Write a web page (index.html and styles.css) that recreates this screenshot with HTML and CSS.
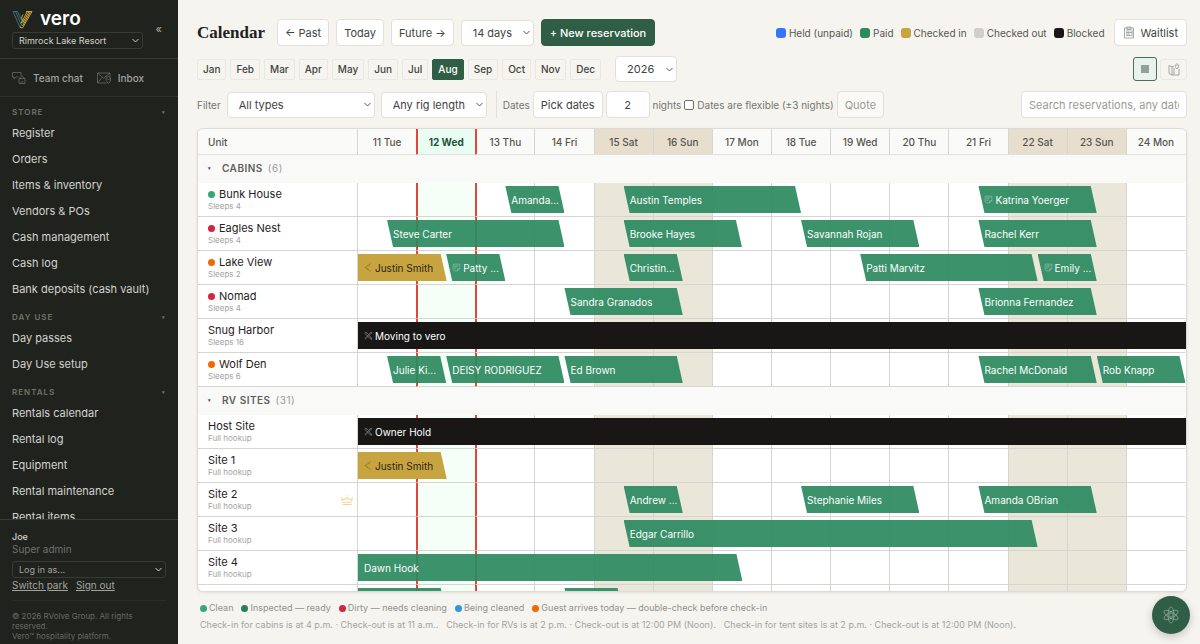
FILE: index.html
```html
<!DOCTYPE html>
<html lang="en">
<head>
  <meta charset="UTF-8" />
  <meta name="viewport" content="width=device-width, initial-scale=1" />
  <title>Calendar - vero</title>
  <link rel="stylesheet" href="styles.css">
</head>
<body>
  <!-- shared icons -->
  <svg class="sprite" aria-hidden="true">
    <symbol id="icon-note" viewBox="0 0 16 16">
      <path d="M2 2h12v8l-4 4H4l-2-2zM10 14v-4h4M4 5h8M4 7h5M4 10c1-2 2 1 3-1" />
    </symbol>
    <symbol id="icon-share" viewBox="0 0 16 16">
      <path d="M12 1L8 4 4 7l-2 1 3 3 3 1 4 3M8 4l2 1M5 11l2-1M4 7l1 1" />
    </symbol>
    <symbol id="icon-tools" viewBox="0 0 16 16">
      <path d="M2 2l3 1 8 9 1 3-3-1-9-9zM14 2l-3 1-8 9-1 2 2-1 8-8zM3 4l2-1M10 10l2 4M11 3l2 2" />
    </symbol>
    <symbol id="icon-crown" viewBox="0 0 16 16">
      <path d="M2 10L1 6l3 2 1-2M6 8l2-4 2 4M11 6l1 2 3-2-1 4M2 11h12M2 14h12M8 1v1M1 4v1M15 4v1" />
    </symbol>
  </svg>

  <div class="app">
    <aside class="sidebar">
      <div class="brand">
        <div class="brand-main">
          <div class="logo">
            <svg width="21" height="19" viewBox="0 0 42 38" aria-hidden="true">
              <path class="logo-teal" d="M2 3l14 32 5-10L11 3M7 3l12 27M2 3h9" />
              <path class="logo-gold" d="M16 35l5 1L40 3h-6L22 25M37 3L21 32M28 3h6M30 4L18 27M22 9l-3 7 5 9" />
            </svg>
            <span>vero</span>
          </div>
          <select class="park-select" aria-label="Park">
            <option>Rimrock Lake Resort</option>
          </select>
        </div>
        <button class="collapse" aria-label="Collapse sidebar">«</button>
      </div>

      <div class="messages">
        <a href="#">
          <svg width="14" height="14" viewBox="0 0 28 28" aria-hidden="true">
            <path d="M1 3h17v6M1 3v9h3v4l4-4h5M14 15v10h12V15zM16 15c0-5 8-5 8 0M17 22h6M20 8v2" />
          </svg>
          Team chat
        </a>
        <a href="#">
          <svg width="14" height="14" viewBox="0 0 28 28" aria-hidden="true">
            <path d="M1 4h25v9M1 4v20h18M1 4l12 10L26 4M1 24l9-11M23 25l-5-6v-6l5-2 4 3v6zM20 15l3 3 3-3" />
          </svg>
          Inbox
        </a>
      </div>

      <nav class="menu">
        <h2>Store <span>▾</span></h2>
        <a href="#">Register</a>
        <a href="#">Orders</a>
        <a href="#">Items &amp; inventory</a>
        <a href="#">Vendors &amp; POs</a>
        <a href="#">Cash management</a>
        <a href="#">Cash log</a>
        <a href="#">Bank deposits (cash vault)</a>
        <h2>Day use <span>▾</span></h2>
        <a href="#">Day passes</a>
        <a href="#">Day Use setup</a>
        <h2>Rentals <span>▾</span></h2>
        <a href="#">Rentals calendar</a>
        <a href="#">Rental log</a>
        <a href="#">Equipment</a>
        <a href="#">Rental maintenance</a>
        <a href="#">Rental items</a>
      </nav>

      <div class="account">
        <div class="account-name">Joe</div>
        <div class="account-role">Super admin</div>
        <select class="login-select" aria-label="Log in as">
          <option>Log in as...</option>
        </select>
        <div class="account-links">
          <a href="#">Switch park</a>
          <a href="#">Sign out</a>
        </div>
        <p class="copyright">© 2026 RVolve Group. All rights reserved.<br>Vero™ hospitality platform.</p>
      </div>
    </aside>

    <main class="main">
      <div class="toolbar">
        <h1>Calendar</h1>
        <button class="btn">← Past</button>
        <button class="btn">Today</button>
        <button class="btn">Future →</button>
        <select class="field days-select" aria-label="Days shown">
          <option>14 days</option>
        </select>
        <button class="btn primary">+ New reservation</button>
        <ul class="legend">
          <li><i class="held"></i>Held (unpaid)</li>
          <li><i class="paid"></i>Paid</li>
          <li><i class="checked-in"></i>Checked in</li>
          <li><i class="checked-out"></i>Checked out</li>
          <li><i class="blocked"></i>Blocked</li>
        </ul>
        <button class="btn waitlist">
          <svg width="12" height="13" viewBox="0 0 24 26" aria-hidden="true">
            <path d="M3 4h18v20H3zM8 2h8v5H8zM6 10h9M6 13h12M6 16h8M6 19h11M18 7v14" />
          </svg>
          Waitlist
        </button>
      </div>

      <div class="months-row">
        <div class="months" id="months"></div>
        <select class="field year-select" aria-label="Year">
          <option>2026</option>
        </select>
        <div class="views">
          <button class="view active" aria-label="Grid view"><i></i></button>
          <button class="view" aria-label="Map view">
            <svg width="12" height="13" viewBox="0 0 24 26" aria-hidden="true">
              <path d="M2 5l6 3v16l-6-3zM8 8l4-2M8 24h14V12M12 10v13M18 12c-6-6-3-10 0-10s6 4 0 10zM17 5h2" />
            </svg>
          </button>
        </div>
      </div>

      <div class="filters">
        <label for="type">Filter</label>
        <select class="field type-select" id="type">
          <option>All types</option>
        </select>
        <select class="field rig-select" aria-label="Rig length">
          <option>Any rig length</option>
        </select>
        <div class="dates">
          <span>Dates</span>
          <button class="btn">Pick dates</button>
          <input class="field nights" id="nights" type="text" value="2">
          <label for="nights">nights</label>
          <label class="flexible"><input type="checkbox">Dates are flexible (±3 nights)</label>
          <button class="btn" disabled>Quote</button>
        </div>
        <input class="field search" type="text" placeholder="Search reservations, any date" aria-label="Search reservations">
      </div>

      <div class="calendar">
        <table>
          <thead>
            <tr id="days"><th class="unit-head">Unit</th></tr>
          </thead>
          <tbody id="units"></tbody>
        </table>
      </div>

      <ul class="statuses">
        <li><i class="dot clean"></i>Clean</li>
        <li><i class="dot inspected"></i>Inspected — ready</li>
        <li><i class="dot dirty"></i>Dirty — needs cleaning</li>
        <li><i class="dot cleaning"></i>Being cleaned</li>
        <li><i class="dot arriving"></i>Guest arrives today — double-check before check-in</li>
      </ul>
      <div class="times">
        <span>Check-in for cabins is at 4 p.m. · Check-out is at 11 a.m..</span>
        <span>Check-in for RVs is at 2 p.m. · Check-out is at 12:00 PM (Noon).</span>
        <span>Check-in for tent sites is at 2 p.m. · Check-out is at 12:00 PM (Noon).</span>
      </div>
    </main>
  </div>

  <button class="assistant" aria-label="Assistant">
    <svg width="18" height="18" viewBox="0 0 36 36" aria-hidden="true">
      <ellipse cx="18" cy="18" rx="6" ry="16" />
      <ellipse cx="18" cy="18" rx="6" ry="16" transform="rotate(60 18 18)" />
      <ellipse cx="18" cy="18" rx="6" ry="16" transform="rotate(120 18 18)" />
      <circle cx="18" cy="18" r="4" />
    </svg>
  </button>

  <script src="script.js"></script>
</body>
</html>
```
FILE: styles.css
```css
* {
  box-sizing: border-box;
}

body {
  margin: 0;
  background: #f5f4ef;
  color: #1f211d;
  font-family: Inter, "Liberation Sans", sans-serif;
  font-size: 11px;
}

button,
input,
select {
  font: inherit;
  color: inherit;
  margin: 0;
}

ul {
  list-style: none;
  margin: 0;
  padding: 0;
}

.sprite {
  display: none;
}

svg {
  flex: none;
  fill: none;
  stroke: currentColor;
}

.app {
  display: flex;
  height: 100vh;
}

/* SIDEBAR */
.sidebar {
  flex: none;
  width: 178px;
  display: flex;
  flex-direction: column;
  background: #20221d;
  color: #d3d3ce;
}

.brand {
  display: flex;
  align-items: center;
  justify-content: space-between;
  padding: 8px 14px 9px 12px;
  border-bottom: 1px solid #383a35;
}

.logo {
  display: flex;
  align-items: center;
  gap: 7px;
  height: 22px;
  margin-bottom: 2px;
  color: #fff;
  font-size: 19px;
  font-weight: 600;
  line-height: 20px;
}

.logo svg {
  stroke-width: 2;
}

.logo-teal {
  stroke: #3f7277;
}

.logo-gold {
  stroke: #c9a43c;
}

.park-select,
.login-select {
  appearance: none;
  display: block;
  height: 17px;
  padding: 0 18px 0 6px;
  border: 1px solid #383a35;
  border-radius: 3px;
  background: url("data:image/svg+xml,%3Csvg xmlns='http://www.w3.org/2000/svg' width='7' height='5'%3E%3Cpath d='M.5 1l3 3 3-3' fill='none' stroke='%23ccc'/%3E%3C/svg%3E") no-repeat right 3px center;
  font-size: 9px;
}

.park-select {
  width: 131px;
}

.collapse {
  padding: 0 2px;
  border: 0;
  background: none;
  color: #a9aaa5;
}

.messages {
  display: flex;
  gap: 14px;
  padding: 0 12px;
  border-bottom: 1px solid #30322d;
}

.messages a {
  display: flex;
  align-items: center;
  gap: 7px;
  height: 37px;
  color: #a3a49f;
  font-size: 10px;
  font-weight: 500;
  text-decoration: none;
}

.messages svg {
  color: #6d6f69;
  stroke-width: 1.5;
}

.menu {
  flex: 1;
  min-height: 0;
  overflow: hidden;
  padding: 7px 12px 0;
}

.menu h2 {
  display: flex;
  justify-content: space-between;
  margin: 7px 0 0;
  color: #70726b;
  font-size: 8px;
  font-weight: 600;
  line-height: 16px;
  letter-spacing: 1px;
  text-transform: uppercase;
}

.menu h2:first-child {
  margin-top: 0;
}

.menu h2 span {
  font-size: 5px;
}

.menu a {
  display: block;
  color: #d3d3ce;
  line-height: 26px;
  text-decoration: none;
}

.account {
  padding: 10px 12px 3px;
  border-top: 1px solid #383a35;
  font-size: 10px;
  line-height: 13px;
}

.account-name {
  font-size: 9px;
  font-weight: 500;
}

.account-role {
  color: #6f716b;
}

.login-select {
  width: 100%;
  margin-top: 5px;
  color: #a3a49f;
}

.account-links {
  display: flex;
  gap: 8px;
  line-height: 14px;
}

.account-links a {
  color: #a3a49f;
}

.copyright {
  margin: 8px 0 0;
  padding-top: 10px;
  border-top: 1px solid #2a2c27;
  color: #686a64;
  font-size: 8px;
  line-height: 10px;
}

/* MAIN */
.main {
  flex: 1;
  min-width: 0;
  display: flex;
  flex-direction: column;
  padding: 19px 13px 12px 19px;
}

.toolbar,
.months-row,
.filters,
.dates {
  display: flex;
  align-items: center;
}

.toolbar {
  gap: 7px;
  margin-bottom: 10px;
}

h1 {
  margin: 0 5px 0 0;
  font-family: "Liberation Serif", serif;
  font-size: 17px;
  font-weight: 700;
  line-height: 26px;
}

.btn,
.field {
  height: 27px;
  padding: 0 7px;
  border: 1px solid #e2e0da;
  border-radius: 4px;
  background-color: #fff;
  color: #42443f;
  white-space: nowrap;
}

.btn.primary {
  padding: 0 8px;
  border-color: #2f5d45;
  background: #2f5d45;
  color: #fff;
  font-weight: 500;
}

.btn:disabled {
  background: #faf9f6;
  color: #9b9c97;
}

select.field {
  appearance: none;
  height: 26px;
  padding: 0 18px 0 11px;
  background-image: url("data:image/svg+xml,%3Csvg xmlns='http://www.w3.org/2000/svg' width='7' height='5'%3E%3Cpath d='M.5 1l3 3 3-3' fill='none' stroke='%23555'/%3E%3C/svg%3E");
  background-repeat: no-repeat;
  background-position: right 3px center;
}

.days-select {
  width: 73px;
}

.legend {
  display: flex;
  gap: 7px;
  margin-left: auto;
  color: #55574f;
  font-size: 10px;
}

.legend li {
  display: flex;
  align-items: center;
  gap: 3px;
}

.legend i {
  width: 10px;
  height: 10px;
  border-radius: 3px;
}

.held { background: #3576f6; }
.paid { background: #2d8a60; }
.checked-in { background: #c7a440; }
.checked-out { background: #d0cfca; }
.blocked { background: #181715; }

.waitlist {
  display: flex;
  align-items: center;
  gap: 6px;
  margin-left: 2px;
  padding: 0 8px;
}

.waitlist svg,
.view svg {
  color: #8b8d87;
  stroke-width: 1.5;
}

.months-row {
  margin-bottom: 9px;
}

.months {
  display: flex;
  gap: 4px;
}

.months button {
  height: 21px;
  padding: 0 5px;
  border: 1px solid #eae8e2;
  border-radius: 2px;
  background: none;
  color: #42443f;
  font-size: 10px;
  font-weight: 500;
}

.months .active {
  border-color: #2f5d45;
  background: #2f5d45;
  color: #fff;
}

.year-select {
  width: 62px;
  margin-left: 14px;
}

.views {
  display: flex;
  align-items: center;
  gap: 3px;
  margin-left: auto;
}

.view {
  display: flex;
  align-items: center;
  justify-content: center;
  width: 27px;
  height: 21px;
  padding: 0;
  border: 1px solid #eae8e2;
  border-radius: 3px;
  background: none;
}

.view.active {
  width: 24px;
  height: 24px;
  border-color: #4a6e5c;
  background: #e9f2ec;
}

.view i {
  width: 8px;
  height: 8px;
  background: #8fa399;
}

.filters {
  gap: 6px;
  margin-bottom: 10px;
  color: #74766f;
  font-size: 10px;
}

.filters .btn,
.filters .field {
  font-size: 11px;
}

.type-select {
  width: 148px;
}

.rig-select {
  width: 106px;
}

.dates {
  gap: 3px;
  margin-left: 3px;
  padding-left: 6px;
  border-left: 1px solid #e2e0da;
  white-space: nowrap;
}

.nights {
  width: 44px;
  text-align: center;
}

.flexible {
  display: flex;
  align-items: center;
  gap: 3px;
}

.flexible input {
  appearance: none;
  width: 10px;
  height: 10px;
  border: 1px solid #6f716b;
  border-radius: 2px;
  background: #fff;
}

.search {
  width: 166px;
  margin-left: auto;
}

.search::placeholder {
  color: #999b95;
}

/* CALENDAR */
.calendar {
  flex: 1;
  min-height: 0;
  overflow: hidden;
  border: 1px solid #dddbd5;
  border-radius: 6px;
  background: #fff;
  box-shadow: 0 1px 3px rgba(0, 0, 0, 0.08);
}

table {
  width: 100%;
  table-layout: fixed;
  border-collapse: separate;
  border-spacing: 0;
}

th {
  font-weight: 500;
}

thead th {
  height: 26px;
  padding: 0;
  border-right: 1px solid #d5d5d2;
  border-bottom: 1px solid #e0e0dd;
  background: #fafaf9;
  color: #55554f;
  font-size: 10px;
}

thead .unit-head {
  width: 160px;
  padding-left: 10px;
  text-align: left;
}

thead .weekend {
  background: #e8decd;
}

thead .today {
  background: #e9fdf2;
  color: #24543b;
  font-weight: 700;
}

.group th {
  height: 28px;
  padding: 0 10px 2px;
  background: #f9f9f8;
  text-align: left;
}

.group button {
  display: flex;
  align-items: center;
  padding: 0;
  border: 0;
  background: none;
  color: #5f605b;
  font-size: 10px;
  font-weight: 600;
  letter-spacing: 0.5px;
  text-transform: uppercase;
}

.group button i {
  width: 14px;
  font-size: 5px;
  font-style: normal;
  text-align: left;
}

.group button span {
  margin-left: 5px;
  color: #9b9c97;
  font-weight: 400;
}

.unit th,
.unit td {
  height: 34px;
  padding: 0;
  border-right: 1px solid #d5d5d2;
  border-bottom: 1px solid #d5d5d2;
}

.unit th {
  padding: 0 4px 0 10px;
  text-align: left;
}

.unit-info {
  display: flex;
  align-items: center;
  justify-content: space-between;
}

.unit-name {
  display: flex;
  align-items: center;
  gap: 4px;
  font-size: 11px;
  font-weight: 400;
  line-height: 13px;
}

.unit-note {
  color: #a3a39f;
  font-size: 8px;
  font-weight: 400;
  line-height: 10px;
}

.unit-info > svg {
  color: #ecc56c;
}

.unit td {
  position: relative;
}

.unit .weekend {
  background: #eae6da;
}

.unit .today {
  background: #f6fff7;
}

/* red lines on both sides of today */
tr .yesterday,
tr .today {
  border-right-color: #e0473c;
}

.today,
.today + * {
  box-shadow: inset 1px 0 #e0473c;
}

tr > .last {
  border-right-color: transparent;
}

.dot {
  flex: none;
  width: 7px;
  height: 7px;
  border-radius: 50%;
}

.clean { background: #35a878; }
.inspected { background: #26805a; }
.dirty { background: #d0263f; }
.cleaning { background: #2e97e5; }
.arriving { background: #f06a00; }

/* a booking runs from the middle of its first day to the middle of its last */
.booking {
  position: absolute;
  z-index: 1;
  top: 3px;
  left: calc(var(--offset) * 100%);
  width: calc(var(--span) * (100% + 1px));
  height: 27px;
  display: flex;
  align-items: center;
  gap: 2px;
  overflow: hidden;
  padding: 0 6px;
  border: 0;
  color: #fff;
  font-size: 10px;
  white-space: nowrap;
  opacity: 0.93;
  clip-path: polygon(0 0, calc(100% - 6px) 0, 100% 100%, 6px 100%);
}

.booking.from-before {
  clip-path: polygon(0 0, calc(100% - 6px) 0, 100% 100%, 0 100%);
}

.booking.checked-in {
  color: #2b2616;
  opacity: 1;
}

.booking.blocked {
  opacity: 1;
  clip-path: none;
}

.booking svg {
  opacity: 0.5;
}

/* FOOTER */
.statuses {
  display: flex;
  gap: 8px;
  margin-top: 10px;
  padding-left: 3px;
  color: #91928d;
  font-size: 9px;
  line-height: 12px;
}

.statuses li {
  display: flex;
  align-items: center;
  gap: 2px;
}

.times {
  display: flex;
  gap: 8px;
  margin-top: 4px;
  padding-left: 3px;
  color: #a3a49f;
  font-size: 9px;
  line-height: 14px;
  white-space: nowrap;
}

.assistant {
  position: fixed;
  right: 10px;
  bottom: 10px;
  display: flex;
  align-items: center;
  justify-content: center;
  width: 38px;
  height: 38px;
  border: 0;
  border-radius: 50%;
  background: #2f5d45;
  color: #b5cbbf;
  box-shadow: 0 3px 8px rgba(0, 0, 0, 0.2);
}
```
FILE: script.js
```javascript
const months = ["Jan", "Feb", "Mar", "Apr", "May", "Jun", "Jul", "Aug", "Sep", "Oct", "Nov", "Dec"];
const weekdays = ["Sun", "Mon", "Tue", "Wed", "Thu", "Fri", "Sat"];
const firstDay = 11;
const dayCount = 14;
const today = 12;

// booking: [first column, nights, label, state, icon]
const groups = [
  {
    name: "Cabins", count: 6, units: [
      { name: "Bunk House", note: "Sleeps 4", dot: "clean", bookings: [
        [2.5, 1, "Amanda...", "paid"], [4.5, 3, "Austin Temples", "paid"], [10.5, 2, "Katrina Yoerger", "paid", "note"]] },
      { name: "Eagles Nest", note: "Sleeps 4", dot: "dirty", bookings: [
        [0.5, 3, "Steve Carter", "paid"], [4.5, 2, "Brooke Hayes", "paid"],
        [7.5, 2, "Savannah Rojan", "paid"], [10.5, 2, "Rachel Kerr", "paid"]] },
      { name: "Lake View", note: "Sleeps 2", dot: "arriving", bookings: [
        [0, 1.5, "Justin Smith", "checked-in", "share"], [1.5, 1, "Patty ...", "paid", "note"],
        [4.5, 1, "Christin...", "paid"], [8.5, 3, "Patti Marvitz", "paid"], [11.5, 1, "Emily ...", "paid", "note"]] },
      { name: "Nomad", note: "Sleeps 4", dot: "dirty", bookings: [
        [3.5, 2, "Sandra Granados", "paid"], [10.5, 2, "Brionna Fernandez", "paid"]] },
      { name: "Snug Harbor", note: "Sleeps 16", bookings: [[0, 14, "Moving to vero", "blocked", "tools"]] },
      { name: "Wolf Den", note: "Sleeps 6", dot: "arriving", bookings: [
        [0.5, 1, "Julie Ki...", "paid"], [1.5, 2, "DEISY RODRIGUEZ", "paid"], [3.5, 2, "Ed Brown", "paid"],
        [10.5, 2, "Rachel McDonald", "paid"], [12.5, 1.5, "Rob Knapp", "paid"]] }
    ]
  },
  {
    name: "RV sites", count: 31, units: [
      { name: "Host Site", note: "Full hookup", bookings: [[0, 14, "Owner Hold", "blocked", "tools"]] },
      { name: "Site 1", note: "Full hookup", bookings: [[0, 1.5, "Justin Smith", "checked-in", "share"]] },
      { name: "Site 2", note: "Full hookup", premium: true, bookings: [
        [4.5, 1, "Andrew ...", "paid"], [7.5, 2, "Stephanie Miles", "paid"], [10.5, 2, "Amanda OBrian", "paid"]] },
      { name: "Site 3", note: "Full hookup", bookings: [[4.5, 7, "Edgar Carrillo", "paid"]] },
      { name: "Site 4", note: "Full hookup", bookings: [[0, 6.5, "Dawn Hook", "paid"]] },
      { name: "", note: "", bookings: [[0, 1.5, "", "paid"], [3.5, 1, "", "paid"]] }
    ]
  }
];

function icon(name, size) {
  return `<svg width="${size}" height="${size}" aria-hidden="true"><use href="#icon-${name}"></use></svg>`;
}

function dayClass(day) {
  const weekday = (day - firstDay + 2) % 7;
  if (day === today) return "today";
  if (day === today - 1) return "yesterday";
  if (day === firstDay + dayCount - 1) return "last";
  return weekday === 0 || weekday === 6 ? "weekend" : "";
}

function bookingHtml([start, nights, label, state, iconName]) {
  const before = start === 0 ? " from-before" : "";
  return `<button class="booking ${state}${before}" style="--offset: ${start % 1}; --span: ${nights}">
    ${iconName ? icon(iconName, 9) : ""}${label}</button>`;
}

function unitHtml(unit) {
  let cells = "";
  for (let i = 0; i < dayCount; i++) {
    const bookings = unit.bookings.filter((b) => Math.floor(b[0]) === i);
    cells += `<td class="${dayClass(firstDay + i)}">${bookings.map(bookingHtml).join("")}</td>`;
  }
  return `<tr class="unit">
    <th scope="row"><div class="unit-info">
      <div>
        <div class="unit-name">${unit.dot ? `<i class="dot ${unit.dot}"></i>` : ""}${unit.name}</div>
        <div class="unit-note">${unit.note}</div>
      </div>
      ${unit.premium ? icon("crown", 12) : ""}
    </div></th>${cells}</tr>`;
}

document.getElementById("months").innerHTML = months
  .map((m) => `<button class="${m === "Aug" ? "active" : ""}">${m}</button>`)
  .join("");

for (let day = firstDay; day < firstDay + dayCount; day++) {
  const weekday = weekdays[(day - firstDay + 2) % 7];
  document.getElementById("days").innerHTML += `<th class="${dayClass(day)}">${day} ${weekday}</th>`;
}

document.getElementById("units").innerHTML = groups
  .map((g) => `<tr class="group"><th colspan="15"><button><i>▾</i>${g.name} <span>(${g.count})</span></button></th></tr>`
    + g.units.map(unitHtml).join(""))
  .join("");
```
